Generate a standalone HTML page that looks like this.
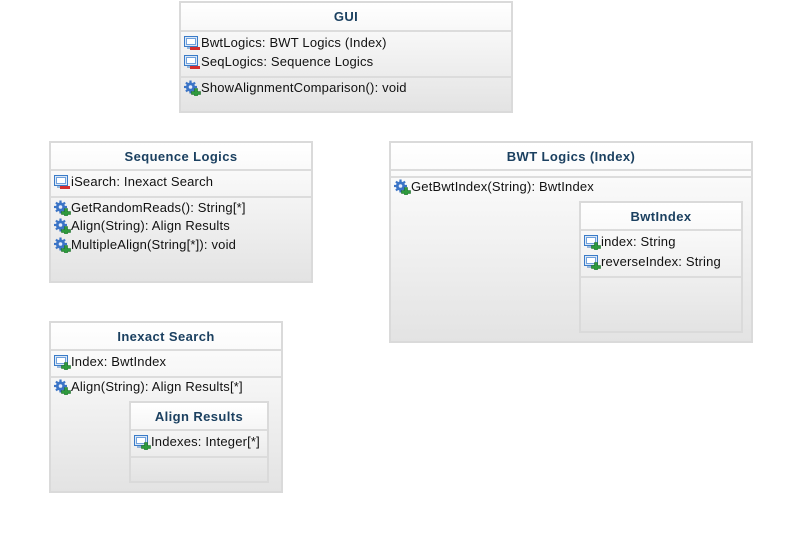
<!DOCTYPE html>
<html><head><meta charset="utf-8"><style>
body{margin:0;width:802px;height:542px;background:#fff;position:relative;overflow:hidden;font-family:"Liberation Sans","DejaVu Sans",sans-serif;}
.box{position:absolute;box-sizing:border-box;border:2px solid #dadada;background:linear-gradient(#ffffff,#e3e3e3);}
.ln{position:absolute;left:0;right:0;height:2px;background:#dcdcdc;}
.t{position:absolute;font-size:13px;letter-spacing:0.18px;line-height:20px;color:#111;white-space:nowrap;}
.h{position:absolute;left:0;right:0;text-align:center;font-weight:bold;font-size:13px;letter-spacing:0.4px;line-height:20px;color:#1b4060;}
.ic{position:absolute;width:17px;height:16px;}
</style></head><body>
<svg width="0" height="0" style="position:absolute">
<defs>
<g id="fld"><rect x="0.5" y="1.5" width="13" height="10" fill="#dbe8f7" stroke="#3a7bc8"/><rect x="2.5" y="3.5" width="9" height="6" fill="#fff" stroke="#6fa0dc"/><line x1="3" y1="13" x2="11" y2="13" stroke="#3a7bc8"/></g>
<g id="minus"><rect x="6" y="12" width="10" height="3" fill="#d32f2f"/></g>
<g id="plus"><path d="M10.5 8.5h3v3h3v3h-3v3h-3v-3h-3v-3h3z" fill="#2e9a3e" stroke="#1d6b29" stroke-width="0.6"/></g>
<g id="gear"><circle cx="6.5" cy="7" r="4.6" fill="#3b74c6"/><g stroke="#3b74c6" stroke-width="2.2"><line x1="6.5" y1="0.5" x2="6.5" y2="13.5"/><line x1="0" y1="7" x2="13" y2="7"/><line x1="2" y1="2.5" x2="11" y2="11.5"/><line x1="11" y1="2.5" x2="2" y2="11.5"/></g><circle cx="6.5" cy="7" r="1.8" fill="#e6eefb"/></g>
</defs></svg>

<div class="box" style="left:179px;top:1px;width:334px;height:112px;">
<div class="h" style="top:4px">GUI</div>
<div class="ln" style="top:27px"></div>
<div class="ln" style="top:73px"></div>
</div>
<svg class="ic" style="left:184px;top:35px"><use href="#fld"/><use href="#minus"/></svg>
<div class="t" style="left:201px;top:33px">BwtLogics: BWT Logics (Index)</div>
<svg class="ic" style="left:184px;top:54px"><use href="#fld"/><use href="#minus"/></svg>
<div class="t" style="left:201px;top:52px">SeqLogics: Sequence Logics</div>
<svg class="ic" style="left:184px;top:80px"><use href="#gear"/><use href="#plus"/></svg>
<div class="t" style="left:201px;top:78px">ShowAlignmentComparison(): void</div>

<div class="box" style="left:49px;top:141px;width:264px;height:142px;">
<div class="h" style="top:4px">Sequence Logics</div>
<div class="ln" style="top:26px"></div>
<div class="ln" style="top:53px"></div>
</div>
<svg class="ic" style="left:54px;top:174px"><use href="#fld"/><use href="#minus"/></svg>
<div class="t" style="left:71px;top:172px">iSearch: Inexact Search</div>
<svg class="ic" style="left:54px;top:200px"><use href="#gear"/><use href="#plus"/></svg>
<div class="t" style="left:71px;top:198px">GetRandomReads(): String[*]</div>
<svg class="ic" style="left:54px;top:218px"><use href="#gear"/><use href="#plus"/></svg>
<div class="t" style="left:71px;top:216px">Align(String): Align Results</div>
<svg class="ic" style="left:54px;top:237px"><use href="#gear"/><use href="#plus"/></svg>
<div class="t" style="left:71px;top:235px">MultipleAlign(String[*]): void</div>

<div class="box" style="left:389px;top:141px;width:364px;height:202px;">
<div class="h" style="top:4px">BWT Logics (Index)</div>
<div class="ln" style="top:26px"></div>
<div class="ln" style="top:33px"></div>
</div>
<svg class="ic" style="left:394px;top:179px"><use href="#gear"/><use href="#plus"/></svg>
<div class="t" style="left:411px;top:177px">GetBwtIndex(String): BwtIndex</div>

<div class="box" style="left:579px;top:201px;width:164px;height:132px;">
<div class="h" style="top:4px">BwtIndex</div>
<div class="ln" style="top:26px"></div>
<div class="ln" style="top:73px"></div>
</div>
<svg class="ic" style="left:584px;top:234px"><use href="#fld"/><use href="#plus"/></svg>
<div class="t" style="left:601px;top:232px">index: String</div>
<svg class="ic" style="left:584px;top:254px"><use href="#fld"/><use href="#plus"/></svg>
<div class="t" style="left:601px;top:252px">reverseIndex: String</div>

<div class="box" style="left:49px;top:321px;width:234px;height:172px;">
<div class="h" style="top:4px">Inexact Search</div>
<div class="ln" style="top:26px"></div>
<div class="ln" style="top:53px"></div>
</div>
<svg class="ic" style="left:54px;top:354px"><use href="#fld"/><use href="#plus"/></svg>
<div class="t" style="left:71px;top:352px">Index: BwtIndex</div>
<svg class="ic" style="left:54px;top:379px"><use href="#gear"/><use href="#plus"/></svg>
<div class="t" style="left:71px;top:377px">Align(String): Align Results[*]</div>

<div class="box" style="left:129px;top:401px;width:140px;height:82px;">
<div class="h" style="top:4px">Align Results</div>
<div class="ln" style="top:26px"></div>
<div class="ln" style="top:53px"></div>
</div>
<svg class="ic" style="left:134px;top:434px"><use href="#fld"/><use href="#plus"/></svg>
<div class="t" style="left:151px;top:432px">Indexes: Integer[*]</div>
</body></html>
